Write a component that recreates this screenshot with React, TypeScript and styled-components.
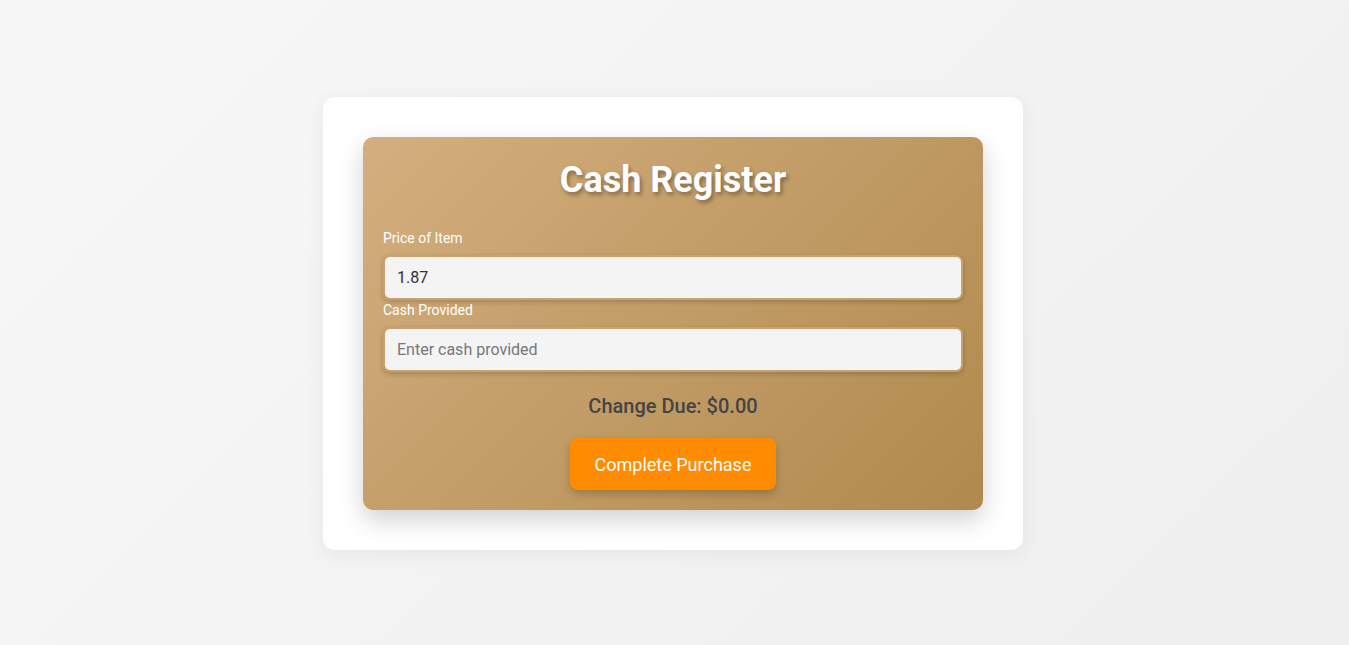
import React, { useState } from "react";
import styled, { createGlobalStyle } from "styled-components";

const GlobalStyle = createGlobalStyle`
  html, body { margin: 0; padding: 0; }
  body {
    font-family: Roboto, "Noto Sans", sans-serif;
    background: linear-gradient(135deg, #f7f7f7 0%, #efefef 100%);
    min-height: 100vh;
  }
  * { box-sizing: border-box; }
`;

const Page = styled.div`
  min-height: 645px;
  display: flex;
  align-items: center;
  justify-content: center;
  padding-top: 2px;
  padding-right: 3px;
`;

const Outer = styled.div`
  width: 700px;
  background: #ffffff;
  border-radius: 12px;
  padding: 40px;
  box-shadow: 0 4px 20px rgba(0, 0, 0, 0.06);
`;

const Register = styled.div`
  border-radius: 10px;
  padding: 22px 20px 20px;
  background: linear-gradient(135deg, #d4ae7e 0%, #c29c66 50%, #b0894d 100%);
  box-shadow: 0 10px 25px rgba(0, 0, 0, 0.18);
  display: flex;
  flex-direction: column;
`;

const Title = styled.h1`
  margin: 0 0 29px;
  text-align: center;
  color: #ffffff;
  font-size: 36px;
  line-height: 42px;
  font-weight: 700;
  text-shadow: 2px 3px 4px rgba(0, 0, 0, 0.35);
`;

const Label = styled.label`
  display: block;
  color: #ffffff;
  font-size: 14px;
  line-height: 16px;
  margin-bottom: 9px;
`;

const Field = styled.div`
  display: flex;
  flex-direction: column;
  margin-bottom: 2px;
`;

const Input = styled.input`
  width: 100%;
  height: 45px;
  padding: 0 12px;
  font-family: Roboto, "Noto Sans", sans-serif;
  font-size: 16px;
  color: #333;
  background: #f4f4f4;
  border: 2px solid #c8a370;
  border-radius: 7px;
  box-shadow: 0 2px 5px rgba(0, 0, 0, 0.2);
  outline: none;
  &::placeholder { color: #777; }
`;

const Change = styled.div`
  margin-top: 20px;
  text-align: center;
  color: #444;
  font-size: 20px;
  line-height: 24px;
  font-weight: 500;
`;

const Button = styled.button`
  align-self: center;
  margin-top: 20px;
  width: 206px;
  height: 52px;
  border: none;
  border-radius: 8px;
  background: #ff8c00;
  color: #ffffff;
  font-family: Roboto, "Noto Sans", sans-serif;
  font-size: 18px;
  cursor: pointer;
  box-shadow: 0 4px 8px rgba(0, 0, 0, 0.2);
`;

export default function App() {
  const [price, setPrice] = useState("1.87");
  const [cash, setCash] = useState("");
  return (
    <>
      <GlobalStyle />
      <Page>
        <Outer>
          <Register>
            <Title>Cash Register</Title>
            <Field>
              <Label>Price of Item</Label>
              <Input value={price} onChange={(e) => setPrice(e.target.value)} />
            </Field>
            <Field>
              <Label>Cash Provided</Label>
              <Input
                placeholder="Enter cash provided"
                value={cash}
                onChange={(e) => setCash(e.target.value)}
              />
            </Field>
            <Change>Change Due: $0.00</Change>
            <Button>Complete Purchase</Button>
          </Register>
        </Outer>
      </Page>
    </>
  );
}
